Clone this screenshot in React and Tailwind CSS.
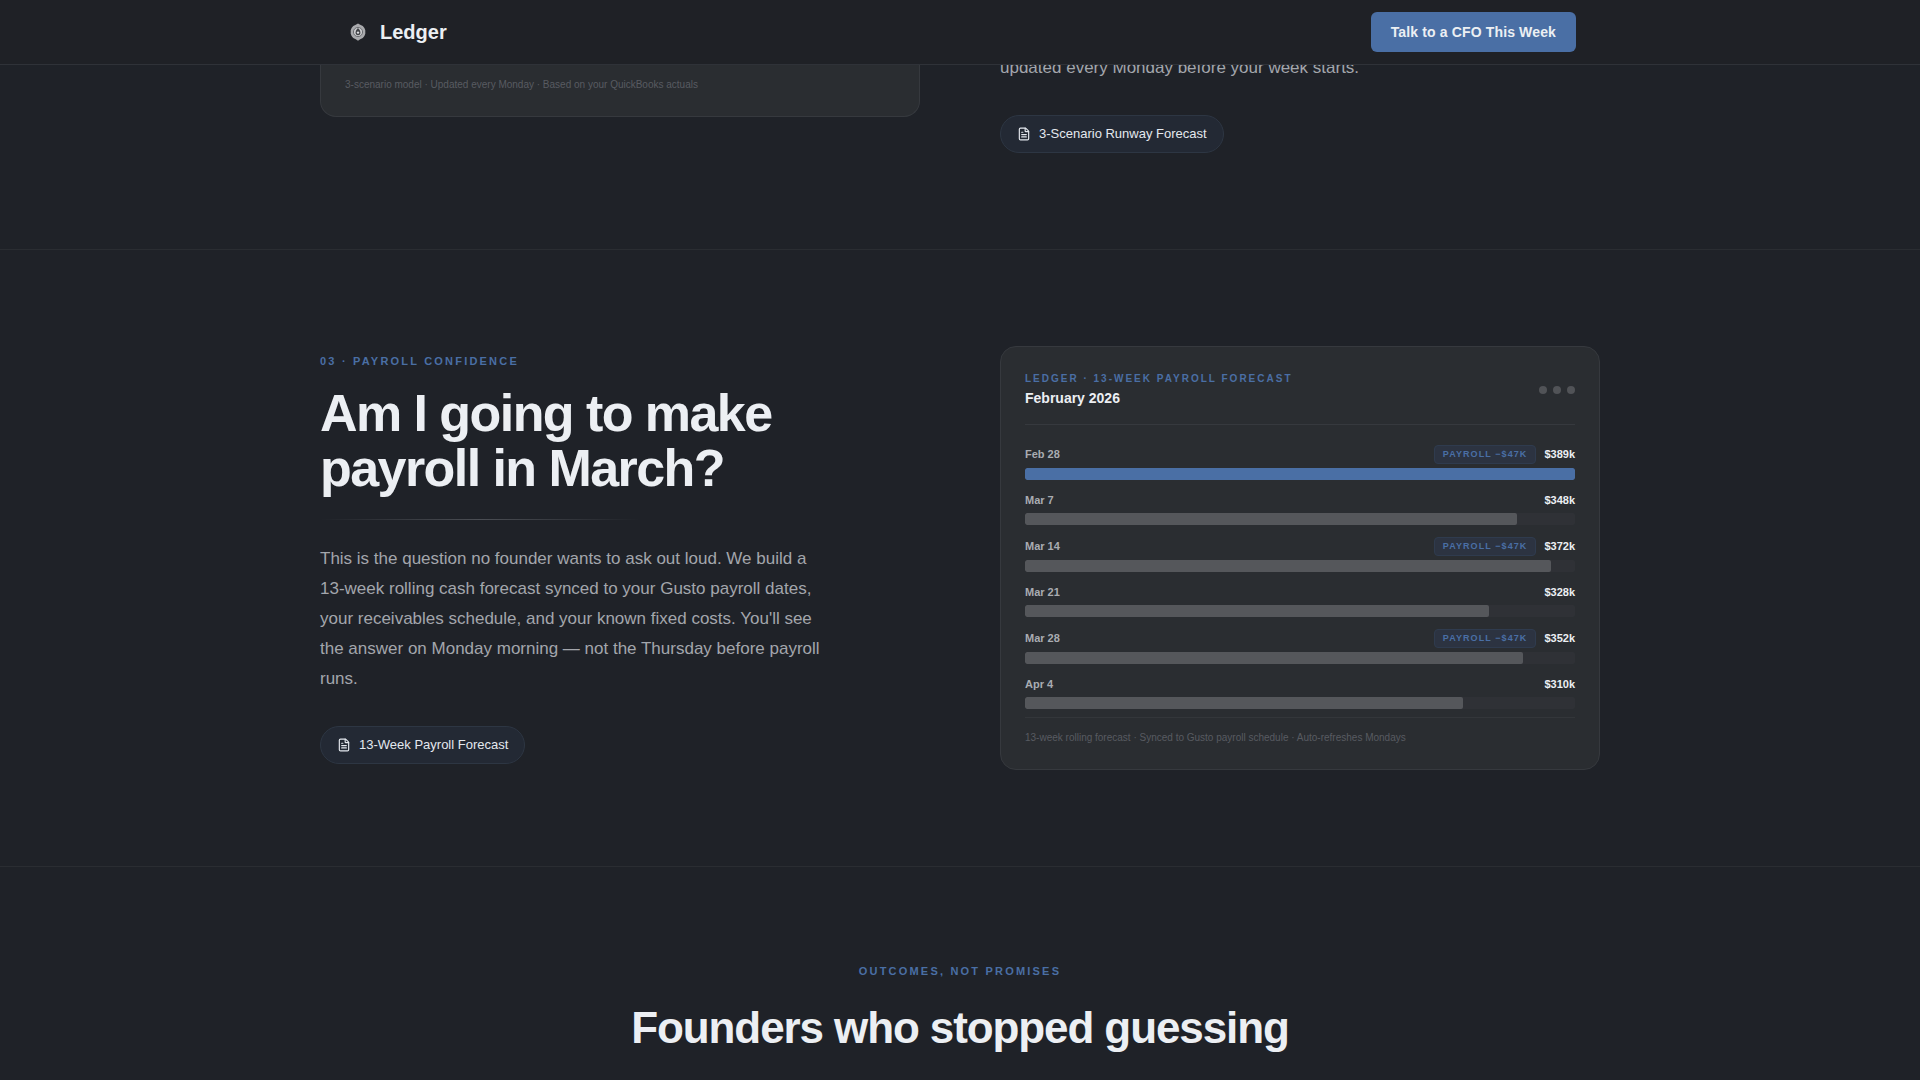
import { FileText } from "lucide-react";

const weeks = [
  { date: "Feb 28", balance: 389, payroll: true, current: true },
  { date: "Mar 7", balance: 348 },
  { date: "Mar 14", balance: 372, payroll: true },
  { date: "Mar 21", balance: 328 },
  { date: "Mar 28", balance: 352, payroll: true },
  { date: "Apr 4", balance: 310 },
];

const maxBalance = Math.max(...weeks.map((w) => w.balance));

function Logo() {
  return (
    <svg width="28" height="28" viewBox="0 0 28 28" aria-hidden="true">
      <path
        d="M14 5.6l2.200 1.200 2.600 1.100 1.600 2 .9 2.400v3.400l-.9 2.400-1.600 2-2.600 1.100-2.200 1.600-2.200-1.600-2.600-1.100-1.600-2-.9-2.400v-3.400l.9-2.400 1.600-2 2.600-1.100z"
        fill="#a9aaad"
      />
      <circle cx="14" cy="14" r="4.600" fill="#c9cacc" stroke="#6c6e72" strokeWidth="1" />
      <path
        d="M14 10c1.600 1.700 2.400 3 2.400 4.600a2.400 2.600 0 0 1-4.800 0c0-1.600.8-2.900 2.400-4.600z"
        fill="#3f4145"
      />
      <circle cx="14" cy="14.600" r="1.200" fill="#dfe0e2" />
    </svg>
  );
}

function Header() {
  return (
    <header className="fixed inset-x-0 top-0 z-50 border-b border-[#2f3238] bg-[#1f2126]">
      <div className="max-w-7xl mx-auto h-16 px-6 flex items-center justify-between">
        <a href="#" className="flex items-center gap-2 text-xl font-bold text-[#eceff3]">
          <Logo />
          Ledger
        </a>
        <button className="h-10 px-5 rounded-md bg-[#4a6fa5] text-sm font-bold tracking-[0.01em] text-[#eceff3] hover:bg-[#5a7fb5]">
          Talk to a CFO This Week
        </button>
      </div>
    </header>
  );
}

function Eyebrow({ children }) {
  return (
    <p className="text-[11px] leading-4 font-bold uppercase tracking-[0.2em] text-[#4a6fa5]">
      {children}
    </p>
  );
}

function Pill({ children }) {
  return (
    <span className="inline-flex items-center gap-2 mt-8 px-4 py-2 rounded-full border border-[#2d3643] bg-[#232934] text-[13px] leading-5 text-[#e4e8ee]">
      <FileText size={14} strokeWidth={2} />
      {children}
    </span>
  );
}

function CardFooter({ children }) {
  return (
    <p className="pt-3 border-t border-[#33363a] text-[10px] leading-[15px] text-[#585b61]">
      {children}
    </p>
  );
}

function WeekRow({ week }) {
  return (
    <li className="flex flex-col gap-1">
      <div className="flex items-center justify-between text-[11px] leading-[17px] font-bold">
        <span className="text-[#a9acb1]">{week.date}</span>
        <div className="flex items-center gap-2">
          {week.payroll && (
            <span className="px-2 rounded-sm border border-[#2f3b4e] bg-[#2c3341] text-[9px] uppercase tracking-[0.12em] text-[#4a6fa5]">
              Payroll −$47k
            </span>
          )}
          <span className="text-[#eceff3]">${week.balance}k</span>
        </div>
      </div>
      <div className="h-3 rounded-xs bg-[#2f3136] overflow-hidden">
        <div
          className={`h-full rounded-xs ${week.current ? "bg-[#4a6fa5]" : "bg-[#55575b]"}`}
          style={{ width: `${(week.balance / maxBalance) * 100}%` }}
        />
      </div>
    </li>
  );
}

function PayrollCard() {
  return (
    <div className="p-6 rounded-2xl border border-[#36393e] bg-[#2a2d31]">
      <div className="flex items-center justify-between pb-4 border-b border-[#36393e]">
        <div>
          <p className="text-[10px] leading-[15px] font-bold uppercase tracking-[0.2em] text-[#4a6fa5]">
            Ledger · 13-Week Payroll Forecast
          </p>
          <h3 className="mt-0.5 text-sm font-bold text-[#eceff3]">February 2026</h3>
        </div>
        <div className="flex gap-1.5">
          <span className="size-2 rounded-full bg-[#515357]" />
          <span className="size-2 rounded-full bg-[#515357]" />
          <span className="size-2 rounded-full bg-[#515357]" />
        </div>
      </div>
      <ul className="mt-5 mb-2 flex flex-col gap-3">
        {weeks.map((week) => (
          <WeekRow key={week.date} week={week} />
        ))}
      </ul>
      <CardFooter>
        13-week rolling forecast · Synced to Gusto payroll schedule · Auto-refreshes Mondays
      </CardFooter>
    </div>
  );
}

export default function App() {
  return (
    <div className="min-h-screen bg-[#1f2228] font-['Liberation_Sans',Arial,sans-serif]">
      <Header />
      <main>
        {/* Runway: scrolled mostly behind the header */}
        <section className="pb-24">
          <div className="max-w-7xl mx-auto grid grid-cols-2 gap-20 items-start">
            <div className="px-6 pb-6 pt-16 rounded-b-2xl border border-t-0 border-[#36393e] bg-[#2a2d31]">
              <CardFooter>
                3-scenario model · Updated every Monday · Based on your QuickBooks actuals
              </CardFooter>
            </div>
            <div className="pt-[53px] flex flex-col items-start">
              <p className="max-w-lg text-[17px] leading-[30px] text-[#a3a6ac]">
                updated every Monday before your week starts.
              </p>
              <Pill>3-Scenario Runway Forecast</Pill>
            </div>
          </div>
        </section>

        {/* Payroll */}
        <section className="py-24 border-t border-[#2a2d32]">
          <div className="max-w-7xl mx-auto grid grid-cols-2 gap-20 items-center">
            <div className="flex flex-col items-start">
              <Eyebrow>03 · Payroll Confidence</Eyebrow>
              <h2 className="mt-[17px] text-[52px] leading-[55px] font-bold tracking-[-0.03em] text-[#eceff3]">
                Am I going to make
                <br />
                payroll in March?
              </h2>
              <div className="mt-[23px] mb-6 h-px w-80 bg-linear-to-r from-transparent via-[#4b4e54] to-transparent" />
              <p className="max-w-lg text-[17px] leading-[30px] text-[#a3a6ac]">
                This is the question no founder wants to ask out loud. We build a 13-week rolling
                cash forecast synced to your Gusto payroll dates, your receivables schedule, and
                your known fixed costs. You'll see the answer on Monday morning — not the Thursday
                before payroll runs.
              </p>
              <Pill>13-Week Payroll Forecast</Pill>
            </div>
            <PayrollCard />
          </div>
        </section>

        {/* Outcomes */}
        <section className="pt-24 border-t border-[#2a2d32] text-center">
          <Eyebrow>Outcomes, Not Promises</Eyebrow>
          <h2 className="mt-6 text-[44px] leading-[50px] font-bold tracking-tight text-[#eceff3]">
            Founders who stopped guessing
          </h2>
        </section>
      </main>
    </div>
  );
}
